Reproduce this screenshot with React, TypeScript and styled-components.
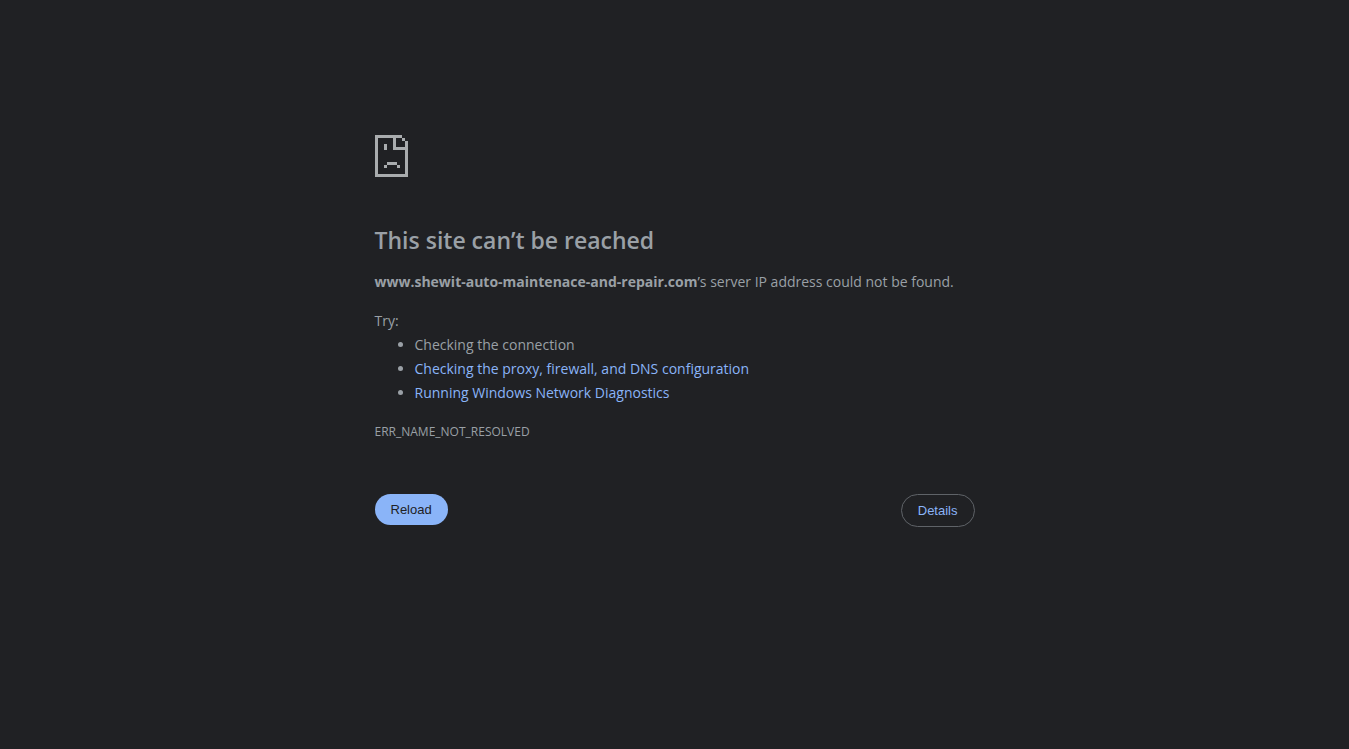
import React from "react";
import styled, { createGlobalStyle } from "styled-components";

const GlobalStyle = createGlobalStyle`
  body {
    margin: 0;
    background: #202124;
    color: #9aa0a6;
    font-family: "Segoe UI", "Open Sans", "Noto Sans", sans-serif;
    font-size: 14px;
    line-height: 24px;
  }
`;

const Page = styled.main`
  box-sizing: border-box;
  max-width: 600px;
  margin: 0 auto;
  padding-top: 135px;
`;

const SadFileIcon = styled.svg`
  display: block;
  width: 33px;
  height: 42px;
  fill: #a9acae;
`;

const Title = styled.h1`
  margin: 48px 0 15px;
  font-size: 23px;
  font-weight: 600;
  line-height: 30px;
`;

const Summary = styled.p`
  margin: 0;
`;

const Suggestions = styled.section`
  margin-top: 15px;
`;

const SuggestionList = styled.ul`
  margin: 0;
  padding-left: 40px;
`;

const Link = styled.a`
  color: #8ab4f8;
  text-decoration: none;
`;

const ErrorCode = styled.p`
  margin: 15px 0 0;
  font-size: 12px;
  line-height: 24px;
`;

const Actions = styled.div`
  display: flex;
  justify-content: space-between;
  align-items: flex-start;
  margin-top: 50px;
`;

const Button = styled.button<{ $primary?: boolean }>`
  padding: 8px 16px;
  border: ${(p) => (p.$primary ? "0" : "1px solid #5f6368")};
  border-radius: 20px;
  background: ${(p) => (p.$primary ? "#8ab4f8" : "transparent")};
  color: ${(p) => (p.$primary ? "#202124" : "#8ab4f8")};
  font-family: Arial, "Liberation Sans", sans-serif;
  font-size: 13px;
  line-height: 15px;
  cursor: pointer;
`;

export default function App() {
  return (
    <>
      <GlobalStyle />
      <Page>
        <SadFileIcon viewBox="0 0 33 42" shapeRendering="crispEdges" aria-hidden="true">
          <path d="M0 0H27V3H21V12H30V6H33V42H0ZM3 3V39H30V15H18V3Z" fillRule="evenodd" />
          <path d="M27 3h3v3h-3zM9 9h3v6H9zM12 27h10v3H12zM9 30h3v3H9zM22 30h3v3h-3z" />
        </SadFileIcon>
        <Title>This site can’t be reached</Title>
        <Summary>
          <strong>www.shewit-auto-maintenace-and-repair.com</strong>’s server IP address could not be found.
        </Summary>
        <Suggestions>
          Try:
          <SuggestionList>
            <li>Checking the connection</li>
            <li><Link href="#proxy">Checking the proxy, firewall, and DNS configuration</Link></li>
            <li><Link href="#diagnostics">Running Windows Network Diagnostics</Link></li>
          </SuggestionList>
        </Suggestions>
        <ErrorCode>ERR_NAME_NOT_RESOLVED</ErrorCode>
        <Actions>
          <Button type="button" $primary>Reload</Button>
          <Button type="button">Details</Button>
        </Actions>
      </Page>
    </>
  );
}
